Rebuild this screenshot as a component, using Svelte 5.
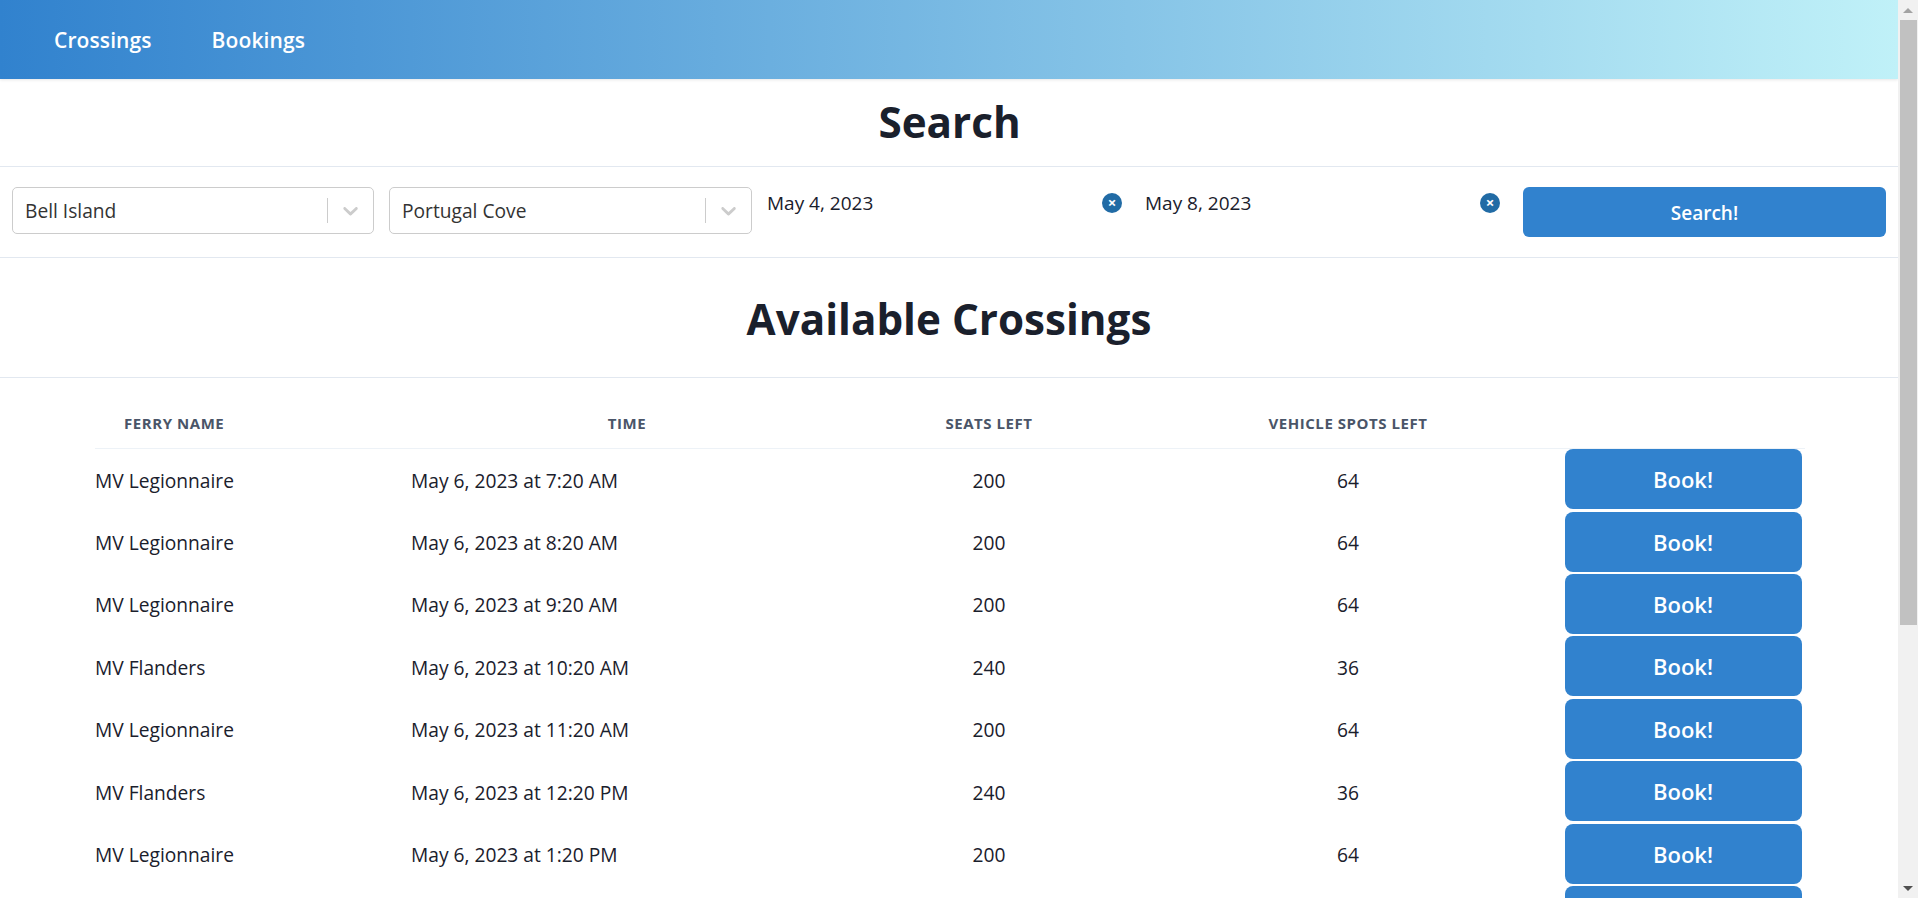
<script>
  const L = 'MV Legionnaire';
  const F = 'MV Flanders';
  const rows = [
    [L, 'May 6, 2023 at 7:20 AM', 200, 64],
    [L, 'May 6, 2023 at 8:20 AM', 200, 64],
    [L, 'May 6, 2023 at 9:20 AM', 200, 64],
    [F, 'May 6, 2023 at 10:20 AM', 240, 36],
    [L, 'May 6, 2023 at 11:20 AM', 200, 64],
    [F, 'May 6, 2023 at 12:20 PM', 240, 36],
    [L, 'May 6, 2023 at 1:20 PM', 200, 64],
    [F, 'May 6, 2023 at 2:20 PM', 240, 36]
  ];
</script>

{#snippet select(label)}
  <div class="select">
    <span class="select-value">{label}</span>
    <span class="select-sep"></span>
    <svg class="chevron" viewBox="0 0 20 20" aria-hidden="true"><path d="M4.516 7.548c.436-.446 1.043-.481 1.576 0L10 11.295l3.908-3.747c.533-.481 1.141-.446 1.574 0 .436.445.408 1.197 0 1.615-.406.418-4.695 4.502-4.695 4.502a1.095 1.095 0 0 1-1.576 0S5.021 9.581 4.617 9.163c-.408-.418-.436-1.17-.101-1.615z"/></svg>
  </div>
{/snippet}

{#snippet datefield(label)}
  <div class="date">
    <span class="date-value">{label}</span>
    <span class="clear">×</span>
  </div>
{/snippet}

<div class="shell">
  <div class="page">
    <header class="nav">
      <a class="nav-link" href="#crossings">Crossings</a>
      <a class="nav-link" href="#bookings">Bookings</a>
    </header>
    <section class="title-block"><h1>Search</h1></section>
    <form class="search" onsubmit={(e) => e.preventDefault()}>
      {@render select('Bell Island')}
      {@render select('Portugal Cove')}
      {@render datefield('May 4, 2023')}
      {@render datefield('May 8, 2023')}
      <button class="search-btn" type="submit">Search!</button>
    </form>
    <section class="avail"><h2>Available Crossings</h2></section>
    <div class="table-wrap">
      <table>
        <colgroup>
          <col class="c1" /><col class="c2" /><col class="c3" /><col class="c4" /><col class="c5" />
        </colgroup>
        <thead>
          <tr>
            <th class="ferry-h">Ferry Name</th>
            <th>Time</th>
            <th>Seats Left</th>
            <th>Vehicle Spots Left</th>
            <th></th>
          </tr>
        </thead>
        <tbody>
          {#each rows as r}
            <tr>
              <td>{r[0]}</td>
              <td>{r[1]}</td>
              <td class="num">{r[2]}</td>
              <td class="num">{r[3]}</td>
              <td class="act"><button class="book">Book!</button></td>
            </tr>
          {/each}
        </tbody>
      </table>
    </div>
  </div>
  <div class="scrollbar" aria-hidden="true">
    <span class="arrow up"></span>
    <span class="thumb"></span>
    <span class="spacer"></span>
    <span class="arrow down"></span>
  </div>
</div>

<style>
  :global(body) {
    margin: 0;
    background: #fff;
    color: #1a202c;
    font-family: "Open Sans", "Noto Sans", sans-serif;
    overflow: hidden;
  }
  .shell { display: flex; width: 1918px; height: 898px; overflow: hidden; }
  .page { width: 1898px; flex: none; overflow: hidden; }
  .nav {
    height: 79px;
    display: flex;
    align-items: center;
    padding-left: 54px;
    gap: 60px;
    background: linear-gradient(to right, #3182ce, #c0f1f8);
    box-shadow: 0 1px 3px rgba(0,0,0,.1);
  }
  .nav-link { color: #fff; font-size: 21px; font-weight: 600; letter-spacing: .1px; text-decoration: none; }
  .title-block { height: 87px; display: flex; align-items: center; justify-content: center; border-bottom: 1px solid #e2e8f0; }
  h1, h2 { margin: 0; font-weight: 700; color: #1a202c; font-size: 42.2px; line-height: 1.2; }
  h1 { padding-left: 1px; }
  h2 { padding-top: 4px; }
  .search {
    display: grid;
    grid-template-columns: 362px 363px 363px 363px 363px;
    gap: 15px;
    box-sizing: border-box;
    height: 91px;
    padding: 20px 12px 0 12px;
    border-bottom: 1px solid #e2e8f0;
  }
  .select {
    display: flex;
    align-items: center;
    height: 47px;
    box-sizing: border-box;
    border: 1px solid #ccc;
    border-radius: 5px;
    padding-left: 12px;
  }
  .select-value { flex: 1; font-size: 19.2px; color: #333; }
  .select-sep { width: 1px; height: 25px; background: #ccc; }
  .chevron { width: 25px; height: 25px; margin: 0 10px; fill: #ccc; }
  .date { display: flex; align-items: flex-start; justify-content: space-between; height: 47px; padding-top: 3px; padding-right: 8px; }
  .date-value { font-size: 19px; color: #1a202c; line-height: 26px; }
  .clear {
    width: 20px; height: 20px; border-radius: 50%;
    background: #216ba5; color: #fff; font-size: 15px; font-weight: 700; line-height: 19px; text-align: center;
    margin-top: 3px;
  }
  .search-btn {
    height: 50px; border: 0; border-radius: 6px; padding: 2px 0 0; background: #3182ce; color: #fff;
    font: 600 19px "Open Sans", sans-serif;
  }
  .avail { height: 119px; display: flex; align-items: center; justify-content: center; border-bottom: 1px solid #e2e8f0; }
  .table-wrap { padding: 26px 0 0 95px; }
  table { border-collapse: collapse; table-layout: fixed; width: 1710px; }
  .c1 { width: 316px; } .c2 { width: 432px; } .c3 { width: 292px; } .c4 { width: 426px; } .c5 { width: 244px; }
  th {
    height: 37px; padding: 0 0 7px; font-size: 15px; font-weight: 700; letter-spacing: .55px;
    text-transform: uppercase; color: #4a5568; border-bottom: 1px solid #edf2f7; text-align: center;
  }
  .ferry-h { text-align: left; padding-left: 29px; }
  td { height: 62.4px; padding: 0; font-size: 19.2px; color: #1a202c; }
  .num { text-align: center; }
  .act { text-align: left; }
  .book {
    display: block; width: 237px; height: 60px; margin: -2px 0 0 3.5px; border: 0; border-radius: 8px;
    background: #3182ce; color: #fff; font: 600 22px "Open Sans", sans-serif;
  }
  .scrollbar { width: 20px; flex: none; background: #f1f1f1; display: flex; flex-direction: column; align-items: flex-start; }
  .arrow { width: 20px; height: 20px; flex: none; display: flex; align-items: center; justify-content: center; }
  .arrow::before { content: ""; border-left: 5px solid transparent; border-right: 5px solid transparent; }
  .up::before { border-bottom: 5px solid #a3a3a3; }
  .down::before { border-top: 5px solid #505050; }
  .thumb { width: 17px; height: 605px; background: #c1c1c1; margin-left: 2px; }
  .spacer { flex: 1; }
</style>
